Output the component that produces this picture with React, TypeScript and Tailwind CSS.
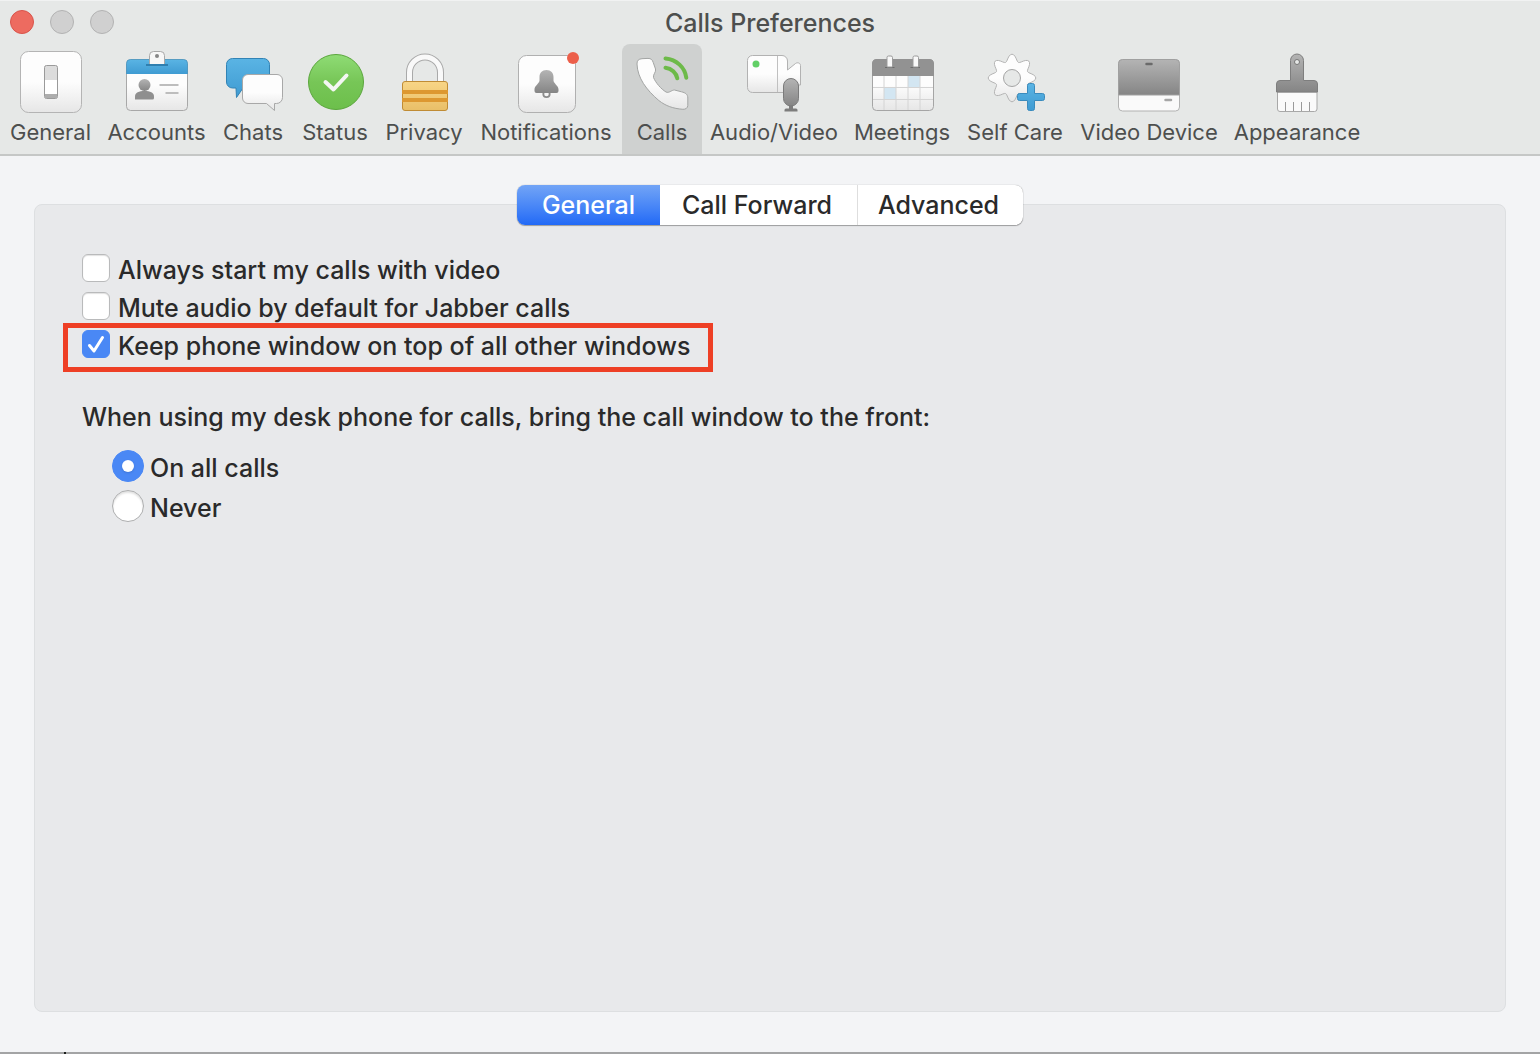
import { useState } from 'react';
import type { ReactNode } from 'react';

const GEAR_PATH =
  Array.from({ length: 96 }, (_, i) => {
    const angle = (i / 96) * Math.PI * 2;
    const radius = 20.3 + 3.5 * Math.cos(8 * angle);
    const x = 29 + radius * Math.sin(angle);
    const y = 28 - radius * Math.cos(angle);
    return `${i === 0 ? 'M' : 'L'}${x.toFixed(2)} ${y.toFixed(2)}`;
  }).join(' ') + 'Z';

function Gradients() {
  return (
    <svg className="absolute size-0" aria-hidden="true">
      <defs>
        <linearGradient id="paper" x1="0" y1="0" x2="0" y2="1">
          <stop offset="0.5" stopColor="#fdfdfd" />
          <stop offset="1" stopColor="#e6e6e6" />
        </linearGradient>
        <linearGradient id="steel" x1="0" y1="0" x2="0" y2="1">
          <stop offset="0" stopColor="#b4b4b4" />
          <stop offset="1" stopColor="#858585" />
        </linearGradient>
        <linearGradient id="blue" x1="0" y1="0" x2="0" y2="1">
          <stop offset="0" stopColor="#5ab4e4" />
          <stop offset="1" stopColor="#3f9bd2" />
        </linearGradient>
        <linearGradient id="green" x1="0" y1="0" x2="0" y2="1">
          <stop offset="0" stopColor="#8fdc75" />
          <stop offset="0.5" stopColor="#77c657" />
          <stop offset="1" stopColor="#6cbf4b" />
        </linearGradient>
        <linearGradient id="gold" x1="0" y1="0" x2="0" y2="1">
          <stop offset="0" stopColor="#f8d586" />
          <stop offset="1" stopColor="#e9bf68" />
        </linearGradient>
      </defs>
    </svg>
  );
}

function Icon({ children }: { children: ReactNode }) {
  return (
    <svg viewBox="0 0 64 64" className="size-16 shrink-0 overflow-visible" fill="none" aria-hidden="true">
      {children}
    </svg>
  );
}

const generalIcon = (
  <Icon>
    <rect x="1.5" y="1.5" width="61" height="61" rx="8" fill="url(#paper)" stroke="#b4b4b4" />
    <rect x="25.5" y="15.5" width="13" height="33" rx="2" fill="#dcdcdc" stroke="#9a9a9a" />
    <rect x="26" y="30" width="12" height="14" fill="#fff" />
    <path d="M26 44h12v3a1 1 0 0 1-1 1H27a1 1 0 0 1-1-1z" fill="#adadad" />
  </Icon>
);

const accountsIcon = (
  <Icon>
    <rect x="1.5" y="9.5" width="61" height="51" rx="4" fill="url(#paper)" stroke="#a8a8a8" />
    <path d="M1.5 24V13.500a4 4 0 0 1 4-4h53a4 4 0 0 1 4 4V24z" fill="url(#blue)" />
    <path d="M1.500 24V13.500a4 4 0 0 1 4-4h53a4 4 0 0 1 4 4V24" stroke="#3b8fc0" strokeOpacity="0.6" />
    <path d="M24.500 14.500V5.500a4 4 0 0 1 4-4h7a4 4 0 0 1 4 4v9z" fill="#f7f7f7" stroke="#a8a8a8" />
    <path d="M21 15h22" stroke="#2f7fb0" strokeWidth="2" />
    <circle cx="32" cy="6" r="2" fill="#868686" />
    <circle cx="19.500" cy="35" r="6" fill="url(#steel)" />
    <path d="M10 49.500v-3c0-4 4-5.500 9.500-5.500s9.500 1.500 9.500 5.500v1.500a1.500 1.500 0 0 1-1.500 1.500z" fill="#8f8f8f" />
    <path d="M34.500 35h19M40.500 43h13" stroke="#bdbdbd" strokeWidth="2" />
  </Icon>
);

const chatsIcon = (
  <Icon>
    <path
      d="M11.500 8.500h31a6 6 0 0 1 6 6V32a6 6 0 0 1-6 6H22l-6.500 9.500L15 38h-3.500a6 6 0 0 1-6-6V14.500a6 6 0 0 1 6-6z"
      fill="url(#blue)"
      stroke="#3183b5"
    />
    <path
      d="M27 24.500h29a5.500 5.500 0 0 1 5.500 5.500v17.500a6 6 0 0 1-6 6H53.500v7l-8-7H27a5.500 5.500 0 0 1-5.500-5.500V30a5.500 5.500 0 0 1 5.500-5.500z"
      fill="url(#paper)"
      stroke="#a8a8a8"
    />
  </Icon>
);

const statusIcon = (
  <Icon>
    <circle cx="33" cy="32" r="27.500" fill="url(#green)" stroke="#5ba63d" />
    <path d="M22.500 32l8 7.500 13-14" stroke="#f4f6f3" strokeWidth="4" strokeLinecap="round" strokeLinejoin="round" />
  </Icon>
);

const privacyIcon = (
  <Icon>
    <path d="M17.500 32V22.500a15.500 15.500 0 0 1 31 0V32" stroke="#a9a9a9" strokeWidth="7" />
    <path d="M17.500 32V22.500a15.500 15.500 0 0 1 31 0V32" stroke="#f9f9f9" strokeWidth="5" />
    <rect x="10.500" y="31.500" width="45" height="29" rx="2.500" fill="url(#gold)" stroke="#c08c35" />
    <path d="M10 42h46M10 50h46" stroke="#dd9831" strokeWidth="4" />
  </Icon>
);

const notificationsIcon = (
  <Icon>
    <rect x="4.500" y="5.500" width="57" height="57" rx="8" fill="url(#paper)" stroke="#b0b0b0" />
    <circle cx="32.500" cy="44" r="3.200" stroke="#8b8b8b" strokeWidth="1.800" />
    <path
      d="M32.500 20c4.500 0 7 3 7 7v3.500c0 3 5 5 5 9V41a2 2 0 0 1-2 2h-20a2 2 0 0 1-2-2v-1.500c0-4 5-6 5-9V27c0-4 2.500-7 7-7z"
      fill="url(#steel)"
    />
    <circle cx="59" cy="8" r="6" fill="#ec5f4a" />
  </Icon>
);

const callsIcon = (
  <Icon>
    <path
      d="M7 14c0-3.500 1.500-5 5-5.300l6-.3c3 0 4.300 1.300 5.200 4l2.300 6.600c.9 3-2.800 5.500-2 8.500 2 5 7.500 11.500 12.500 14.500 3 1.500 5.500-2 8.500-2l7 1.800c4 1 6.300 2.500 6.300 6.200v7.500c0 2.500-2.300 4-5 3.800-9.800-.8-17-3.300-24-8.800C16.500 40 7.500 28 7 14z"
      fill="url(#paper)"
      stroke="#a3a5a4"
    />
    <path d="M35.500 8.500c11 1 19.500 9 20.800 19.200M35.500 17.700c6 .8 10.800 5 11.800 10.600" stroke="#6dba49" strokeWidth="4" strokeLinecap="round" />
  </Icon>
);

const audioVideoIcon = (
  <Icon>
    <path
      d="M10.500 5.500H40a5.500 5.500 0 0 1 5.500 5.500v9l8-6.500c2-1.500 5-.5 5 2V35H45.500v7.500h-35a5 5 0 0 1-5-5v-27a5 5 0 0 1 5-5z"
      fill="url(#paper)"
      stroke="#b2b2b2"
    />
    <path d="M35.500 6v36" stroke="#c0c0c0" />
    <circle cx="14" cy="14" r="3.500" fill="#62cf66" />
    <path d="M47 55h4v3.500h3a1.500 1.500 0 0 1 1.500 1.500v1.500h-13V60a1.500 1.500 0 0 1 1.500-1.500h3z" fill="#7d7d7d" />
    <rect x="41.500" y="28.500" width="15" height="27.500" rx="7.500" fill="url(#steel)" stroke="#7b7b7b" />
  </Icon>
);

const meetingsIcon = (
  <Icon>
    <rect x="2.500" y="9.500" width="61" height="51" rx="4" fill="url(#paper)" stroke="#a5a5a5" />
    <path d="M38 26h12v11H38zM14 37.500h12v12H14z" fill="#d3e6f2" />
    <path d="M14 26v34M26 26v34M38 26v34M50 26v34M3 37.500h60M3 49.500h60" stroke="#d4d4d4" />
    <path d="M2 26V13.500a4.500 4.500 0 0 1 4.500-4.500h53a4.500 4.500 0 0 1 4.500 4.500V26z" fill="#929292" />
    <path d="M15 17.500h9.500M40.500 17.500H50" stroke="#6b6b6b" />
    <path d="M17 17V7.500A1.500 1.500 0 0 1 18.500 6H21a1.500 1.500 0 0 1 1.500 1.500V17zM43 17V7.500A1.500 1.500 0 0 1 44.500 6H47a1.500 1.500 0 0 1 1.500 1.500V17z" fill="#f8f8f8" stroke="#9b9b9b" />
  </Icon>
);

const selfCareIcon = (
  <Icon>
    <path d={GEAR_PATH} fill="url(#paper)" stroke="#b4b4b4" />
    <circle cx="29" cy="28" r="8.500" fill="#e6e8e7" stroke="#a5a5a5" />
    <path
      d="M46.500 33.500h3a2 2 0 0 1 2 2v8h8a2 2 0 0 1 2 2v3a2 2 0 0 1-2 2h-8v8a2 2 0 0 1-2 2h-3a2 2 0 0 1-2-2v-8h-8a2 2 0 0 1-2-2v-3a2 2 0 0 1 2-2h8v-8a2 2 0 0 1 2-2z"
      fill="url(#blue)"
      stroke="#3a8bbd"
    />
  </Icon>
);

const videoDeviceIcon = (
  <Icon>
    <rect x="1.500" y="9.500" width="61" height="51.500" rx="4" fill="#fafafa" stroke="#b2b2b2" />
    <path d="M1.500 45V13.500a4 4 0 0 1 4-4h53a4 4 0 0 1 4 4V45z" fill="url(#steel)" stroke="#a0a0a0" />
    <path d="M29.500 14h5" stroke="#6a6a6a" strokeWidth="2.500" strokeLinecap="round" />
    <path d="M48.500 50h5.500" stroke="#a6a6a6" strokeWidth="2.500" strokeLinecap="round" />
  </Icon>
);

const appearanceIcon = (
  <Icon>
    <path d="M12.500 42h39.500v17a2.500 2.500 0 0 1-2.500 2.500H15a2.500 2.500 0 0 1-2.500-2.500z" fill="#fafafa" stroke="#a8a8a8" />
    <path d="M20.500 52v9M28.500 52v9M36.500 52v9M44.500 52v9" stroke="#9a9a9a" />
    <path
      d="M25.500 30.500v-20a6.500 6.500 0 0 1 13 0v20h10.500a3.500 3.500 0 0 1 3.500 3.500v8h-41v-8a3.500 3.500 0 0 1 3.500-3.500z"
      fill="url(#steel)"
      stroke="#7e7e7e"
    />
    <circle cx="32" cy="12" r="2.500" fill="#e6e8e7" stroke="#777" />
  </Icon>
);

const TOOLBAR = [
  { name: 'General', width: 'w-[97px]', icon: generalIcon },
  { name: 'Accounts', width: 'w-[115px]', icon: accountsIcon },
  { name: 'Chats', width: 'w-[78px]', icon: chatsIcon },
  { name: 'Status', width: 'w-[86px]', icon: statusIcon },
  { name: 'Privacy', width: 'w-[92px]', icon: privacyIcon },
  { name: 'Notifications', width: 'w-[152px]', icon: notificationsIcon },
  { name: 'Calls', width: 'w-20', icon: callsIcon },
  { name: 'Audio/Video', width: 'w-36', icon: audioVideoIcon },
  { name: 'Meetings', width: 'w-28', icon: meetingsIcon },
  { name: 'Self Care', width: 'w-[114px]', icon: selfCareIcon },
  { name: 'Video Device', width: 'w-[154px]', icon: videoDeviceIcon },
  { name: 'Appearance', width: 'w-[142px]', icon: appearanceIcon },
];

const SEGMENTS = [
  { name: 'General', width: 'w-[143px]' },
  { name: 'Call Forward', width: 'w-[197px] pr-1' },
  { name: 'Advanced', width: 'w-[166px] pr-1' },
];

function CheckRow({ label, initial = false, highlighted = false }: { label: string; initial?: boolean; highlighted?: boolean }) {
  const [checked, setChecked] = useState(initial);
  return (
    <label className="relative flex h-[38px] w-fit items-center gap-2 whitespace-nowrap">
      <span className="grid shrink-0">
        <input
          type="checkbox"
          checked={checked}
          onChange={(e) => setChecked(e.target.checked)}
          className="col-start-1 row-start-1 size-7 appearance-none rounded-md border border-[#b9babb] bg-white shadow-[inset_0_1px_1px_rgba(0,0,0,0.12)] checked:border-[#4a88f5] checked:bg-[#4a88f5] checked:shadow-none"
        />
        {checked && (
          <svg viewBox="0 0 28 28" className="pointer-events-none col-start-1 row-start-1 size-7" fill="none" aria-hidden="true">
            <path d="M7.500 15.500l4.500 5.500L20.500 7.500" stroke="#fff" strokeWidth="3" strokeLinecap="round" strokeLinejoin="round" />
          </svg>
        )}
      </span>
      <span className="pt-1">{label}</span>
      {highlighted && (
        <span className="pointer-events-none absolute -top-0.5 -right-[23px] -bottom-[9px] -left-[19px] border-5 border-[#ee3f25]" />
      )}
    </label>
  );
}

function RadioRow({ label, checked, onSelect }: { label: string; checked: boolean; onSelect: () => void }) {
  return (
    <label className="flex h-10 w-fit items-center gap-1.5">
      <span className="grid shrink-0 place-items-center">
        <input
          type="radio"
          name="front"
          checked={checked}
          onChange={onSelect}
          className="col-start-1 row-start-1 size-8 appearance-none rounded-full border border-[#adaeaf] bg-white shadow-[inset_0_2px_2px_rgba(0,0,0,0.12)] checked:border-[#4a88f5] checked:bg-[#4a88f5] checked:shadow-none"
        />
        {checked && <span className="pointer-events-none col-start-1 row-start-1 size-3 rounded-full bg-white shadow-sm" />}
      </span>
      <span className="pt-1">{label}</span>
    </label>
  );
}

export default function App() {
  const [tab, setTab] = useState('Calls');
  const [segment, setSegment] = useState('General');
  const [front, setFront] = useState('On all calls');

  return (
    <div className="flex min-h-screen flex-col bg-[#f3f4f6] font-[Inter,'Liberation_Sans',sans-serif] text-[#2a2a2a]">
      <Gradients />
      <header className="border-b-2 border-[#c5c7c6] bg-[#e6e8e7] text-[#4d4f4e]">
        <div className="grid h-11 grid-cols-[1fr_auto_1fr] items-center border-t border-[#f1f2f2]">
          <div className="flex gap-4 pb-0.5 pl-2.5">
            <button aria-label="Close" className="size-6 rounded-full border border-[#d9544b] bg-[#ed6b60]" />
            <button aria-label="Minimize" className="size-6 rounded-full border border-[#b3b3b3] bg-[#d0d0d0]" />
            <button aria-label="Zoom" className="size-6 rounded-full border border-[#b3b3b3] bg-[#d0d0d0]" />
          </div>
          <h1 className="text-[25px] leading-8 font-[450]">Calls Preferences</h1>
        </div>
        <nav className="flex pl-0.5">
          {TOOLBAR.map((item) => (
            <button
              key={item.name}
              onClick={() => setTab(item.name)}
              className={`flex h-[110px] shrink-0 flex-col items-center gap-1 rounded-t-lg pt-1.5 text-[22px] leading-7 whitespace-nowrap ${item.width} ${
                tab === item.name ? 'bg-[#cfd1d0]' : ''
              }`}
            >
              {item.icon}
              <span>{item.name}</span>
            </button>
          ))}
        </nav>
      </header>

      <main className="flex grow flex-col px-[34px] pt-12 pb-10">
        <section className="grow rounded-lg border border-[#dddfe1] bg-[#e8e9eb] px-[47px] text-[25px] leading-8 font-[450]">
          <div className="-mt-5 flex justify-center">
            <div className="flex h-10 overflow-hidden rounded-lg bg-white shadow-[0_0_1px_rgba(0,0,0,0.4),0_1px_1px_rgba(0,0,0,0.3)]">
              {SEGMENTS.map((item) => (
                <button
                  key={item.name}
                  onClick={() => setSegment(item.name)}
                  className={`border-l first:border-l-0 ${item.width} ${
                    segment === item.name
                      ? 'border-transparent bg-linear-to-b from-[#72a4f6] to-[#2169f6] text-white'
                      : 'border-[#dedede] nth-2:border-transparent'
                  }`}
                >
                  {item.name}
                </button>
              ))}
            </div>
          </div>

          <div className="mt-6">
            <CheckRow label="Always start my calls with video" />
            <CheckRow label="Mute audio by default for Jabber calls" />
            <CheckRow label="Keep phone window on top of all other windows" initial highlighted />
          </div>

          <fieldset className="mt-[38px]">
            <legend>When using my desk phone for calls, bring the call window to the front:</legend>
            <div className="mt-[13px] pl-[30px]">
              {['On all calls', 'Never'].map((label) => (
                <RadioRow key={label} label={label} checked={front === label} onSelect={() => setFront(label)} />
              ))}
            </div>
          </fieldset>
        </section>
      </main>
      <footer className="h-0.5 bg-[#a3a4a5] pl-16">
        <div className="h-full w-0.5 bg-[#1c1f1c]" />
      </footer>
    </div>
  );
}
